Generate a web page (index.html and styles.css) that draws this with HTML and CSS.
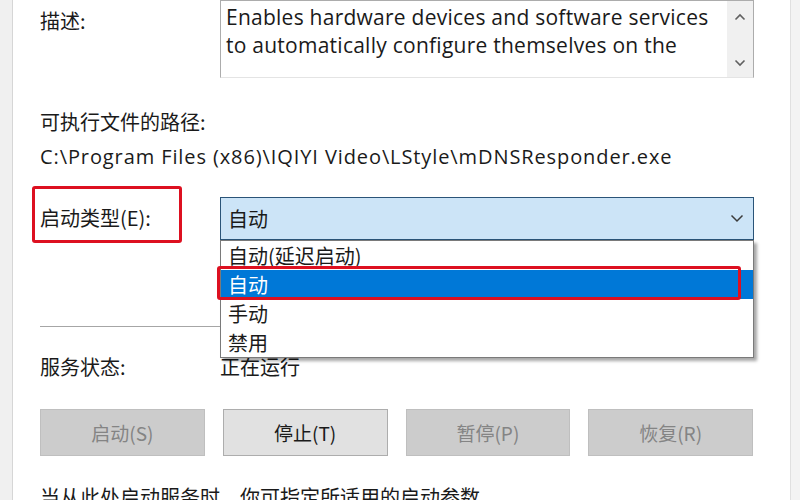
FILE: index.html
```html
<!DOCTYPE html>
<html lang="zh-CN">
<head>
<meta charset="utf-8">
<title>服务属性</title>
<link rel="stylesheet" href="styles.css">
</head>
<body>
<div class="frame">
  <div class="edge-left"></div>
  <main class="content">
    <div class="row desc-row">
      <div class="label">描述:</div>
      <div class="textbox">
        <div class="textbox-text">Enables hardware devices and software services to automatically configure themselves on the network and advertise their presence.</div>
        <div class="scrollbar">
          <svg class="arrow" width="12" height="8" viewBox="0 0 12 8"><path d="M1.5 6.5 L6 2 L10.5 6.5" fill="none" stroke="#606060" stroke-width="1.6"/></svg>
          <svg class="arrow" width="12" height="8" viewBox="0 0 12 8"><path d="M1.5 1.5 L6 6 L10.5 1.5" fill="none" stroke="#606060" stroke-width="1.6"/></svg>
        </div>
      </div>
    </div>

    <div class="label path-label">可执行文件的路径:</div>
    <div class="path">C:\Program Files (x86)\IQIYI Video\LStyle\mDNSResponder.exe</div>

    <div class="row startup-row">
      <div class="label startup-label">启动类型(E):<span class="mark mark-label"></span></div>
      <div class="combo-wrap">
        <div class="combo">
          <span>自动</span>
          <svg width="14" height="9" viewBox="0 0 14 9"><path d="M1.5 1.5 L7 7 L12.5 1.5" fill="none" stroke="#3b3b3b" stroke-width="1.5"/></svg>
        </div>
        <ul class="dropdown">
          <li>自动(延迟启动)</li>
          <li class="selected">自动</li>
          <li>手动</li>
          <li>禁用</li>
          <span class="mark mark-item"></span>
        </ul>
      </div>
    </div>

    <hr class="sep">

    <div class="row status-row">
      <div class="label">服务状态:</div>
      <div class="label">正在运行</div>
    </div>

    <div class="buttons">
      <button class="btn disabled">启动(S)</button>
      <button class="btn">停止(T)</button>
      <button class="btn disabled">暂停(P)</button>
      <button class="btn disabled">恢复(R)</button>
    </div>

    <p class="hint">当从此处启动服务时，你可指定所适用的启动参数。</p>
  </main>
  <div class="edge-right"></div>
</div>
</body>
</html>
```

FILE: styles.css
```css
html, body {
  margin: 0;
  padding: 0;
  background: #ffffff;
}

body {
  width: 800px;
  height: 500px;
  overflow: hidden;
  font-family: "Noto Sans CJK SC", "Open Sans", sans-serif;
  font-size: 20px;
  color: #1a1a1a;
}

.frame {
  display: flex;
  height: 500px;
}

.edge-left {
  width: 12px;
  background: #f0f0f0;
  border-right: 1px solid #d6d6d6;
}

.edge-right {
  width: 9px;
  background: #f3f3f3;
  border-left: 1px solid #e0e0e0;
}

.content {
  flex: 1;
  display: flex;
  flex-direction: column;
  padding: 0 36px 0 27px;
  background: #fff;
}

.row {
  display: grid;
  grid-template-columns: 180px 1fr;
}

.label {
  line-height: 28px;
  height: 28px;
  white-space: nowrap;
}

/* description */
.desc-row {
  height: 78px;
}

.desc-row > .label {
  padding-top: 7px;
}

.textbox {
  display: flex;
  border: 1px solid #acacac;
  border-bottom-color: #e4e4e4;
  height: 76px;
  overflow: hidden;
}

.textbox-text {
  flex: 1;
  padding: 2px 4px 0 5px;
  font-family: "Open Sans", "Noto Sans CJK SC", sans-serif;
  font-size: 21px;
  letter-spacing: 0.25px;
  line-height: 28px;
  color: #1a1a1a;
  overflow: hidden;
  height: 56px;
}

.scrollbar {
  width: 26px;
  background: #f0f0f0;
  display: flex;
  flex-direction: column;
  align-items: center;
  justify-content: space-between;
  padding: 12px 0 10px;
}

/* path */
.path-label {
  margin-top: 30px;
}

.path {
  margin-top: 7px;
  font-family: "Open Sans", "Noto Sans CJK SC", sans-serif;
  font-size: 20px;
  letter-spacing: 0.9px;
  line-height: 28px;
  white-space: nowrap;
}

/* startup */
.startup-row {
  margin-top: 26px;
  height: 43px;
}

.startup-label {
  position: relative;
  margin-top: 7px;
}

.mark {
  position: absolute;
  border: 3px solid #dd1020;
  border-radius: 3px;
  pointer-events: none;
}

.mark-label {
  left: -8px;
  top: -18px;
  width: 144px;
  height: 51px;
}

.combo-wrap {
  position: relative;
}

.combo {
  height: 41px;
  border: 1px solid #2a5478;
  background: #cce4f7;
  display: flex;
  align-items: center;
  justify-content: space-between;
  padding: 0 9px 0 7px;
}

.dropdown {
  position: absolute;
  left: 0;
  right: 0;
  top: 43px;
  margin: 0;
  padding: 0;
  list-style: none;
  background: #fff;
  border: 1px solid #7a7a7a;
  box-shadow: 3px 3px 3px rgba(0, 0, 0, 0.35);
  z-index: 2;
}

.dropdown li {
  height: 29px;
  line-height: 29px;
  padding-left: 7px;
}

.dropdown li.selected {
  background: #0078d7;
  color: #fff;
}

.mark-item {
  left: -4px;
  top: 25px;
  width: 518px;
  height: 28px;
}

/* separator */
.sep {
  margin: 86px 0 0;
  border: 0;
  border-top: 1px solid #a6a6a6;
  height: 0;
}

.status-row {
  margin-top: 26px;
}

/* buttons */
.buttons {
  margin-top: 28px;
  display: grid;
  grid-template-columns: repeat(4, 1fr);
  gap: 18px;
  width: 713px;
}

.btn {
  height: 47px;
  font-family: "Noto Sans CJK SC", "Open Sans", sans-serif;
  font-size: 19px;
  color: #1a1a1a;
  background: #e1e1e1;
  border: 1px solid #adadad;
  padding: 0;
}

.btn.disabled {
  background: #cccccc;
  border-color: #bfbfbf;
  color: #848484;
}

.hint {
  margin: 27px 0 0;
  line-height: 28px;
  white-space: nowrap;
}
```
